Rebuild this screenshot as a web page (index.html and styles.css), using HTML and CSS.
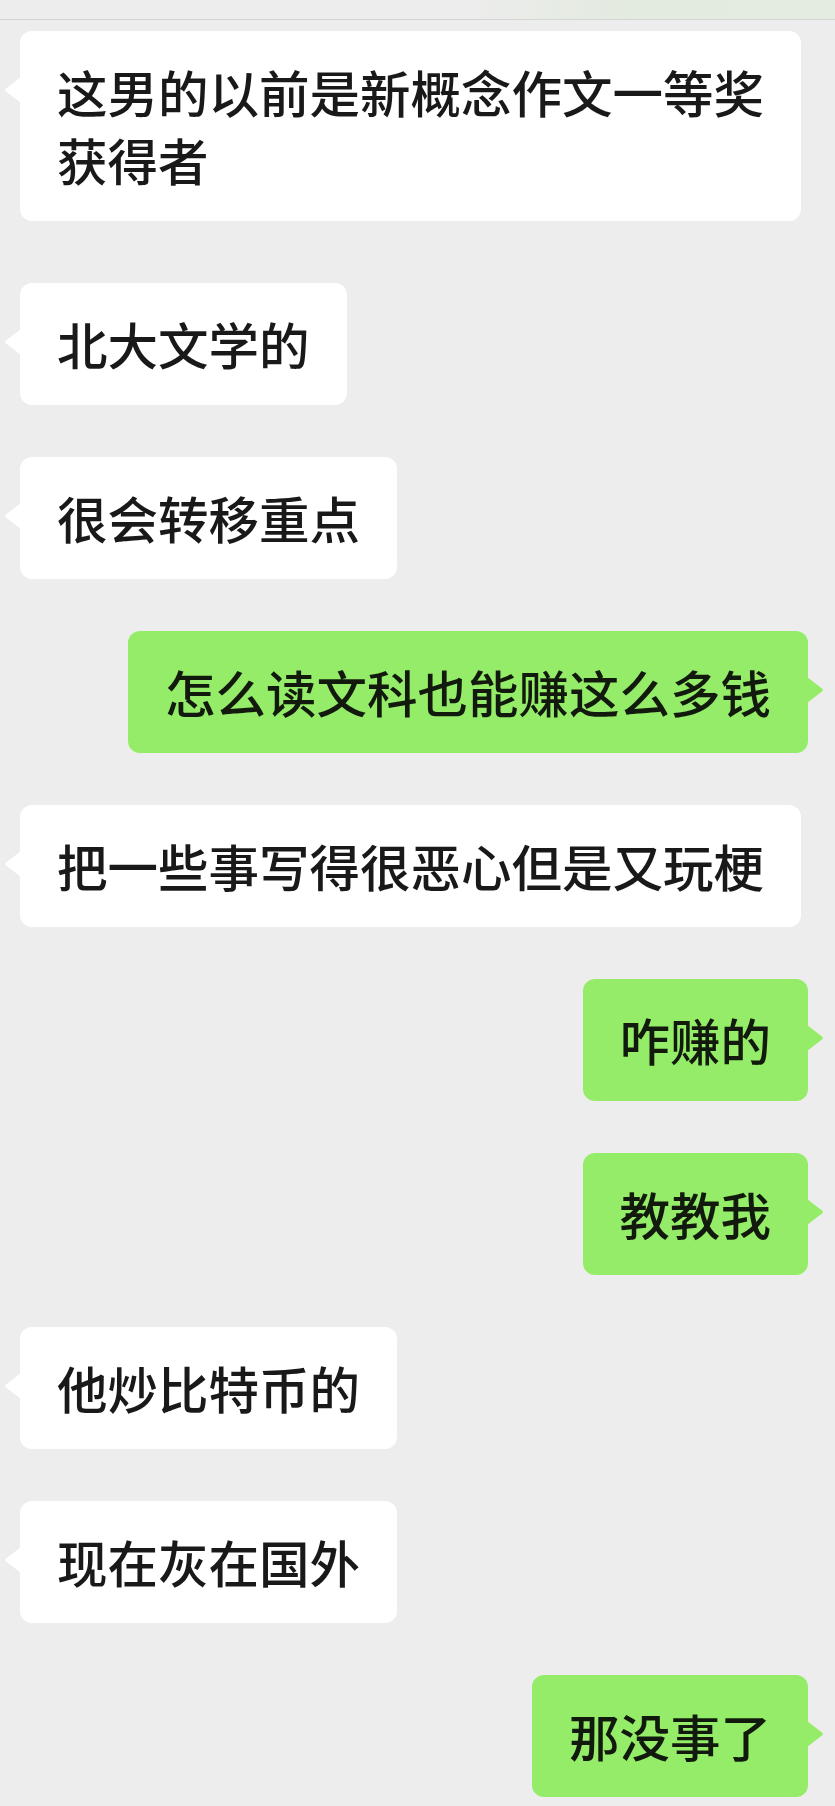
FILE: index.html
```html
<!DOCTYPE html>
<html lang="zh-CN">
<head>
<meta charset="utf-8">
<title>聊天记录</title>
<link rel="stylesheet" href="styles.css">
</head>
<body>
<div class="screen">
  <div class="topbar"></div>
  <div class="chat">
    <div class="row left first"><div class="bubble">这男的以前是新概念作文一等奖获得者</div></div>
    <div class="row left"><div class="bubble">北大文学的</div></div>
    <div class="row left"><div class="bubble">很会转移重点</div></div>
    <div class="row right"><div class="bubble">怎么读文科也能赚这么多钱</div></div>
    <div class="row left"><div class="bubble">把一些事写得很恶心但是又玩梗</div></div>
    <div class="row right"><div class="bubble">咋赚的</div></div>
    <div class="row right"><div class="bubble">教教我</div></div>
    <div class="row left"><div class="bubble">他炒比特币的</div></div>
    <div class="row left"><div class="bubble">现在灰在国外</div></div>
    <div class="row right"><div class="bubble">那没事了</div></div>
  </div>
</div>
</body>
</html>
```
FILE: styles.css
```css
html, body {
  margin: 0;
  padding: 0;
  background: #ededed;
}
.screen {
  width: 835px;
  height: 1806px;
  overflow: hidden;
  background: #ededed;
  font-family: "Noto Sans CJK SC", "Noto Sans", sans-serif;
  color: #191919;
}
.topbar {
  height: 19px;
  border-bottom: 1px solid #d3d5d3;
  background: linear-gradient(90deg, #ededed 0%, #ededed 55%, #e3eadf 75%, #e4ebe1 100%);
}
.chat {
  display: flex;
  flex-direction: column;
  gap: 52px;
  padding-top: 11px;
}
.row {
  display: flex;
}
.row.first {
  margin-bottom: 10px;
}
.row.left {
  justify-content: flex-start;
  padding-left: 20px;
}
.row.right {
  justify-content: flex-end;
  padding-right: 27px;
}
.bubble {
  position: relative;
  box-sizing: border-box;
  max-width: 781px;
  padding: 26px 37px 28px;
  font-size: 50.5px;
  font-weight: 500;
  line-height: 68px;
  border-radius: 12px;
  background: #ffffff;
  word-break: break-all;
}
.right .bubble {
  background: #95ec69;
  color: #111a0c;
}
.bubble::before {
  content: "";
  position: absolute;
  top: 46px;
  width: 16px;
  height: 26px;
  background: inherit;
}
.left .bubble::before {
  left: -15px;
  clip-path: polygon(1px 44%, 0 50%, 1px 56%, 100% 100%, 100% 0);
}
.right .bubble::before {
  right: -15px;
  clip-path: polygon(calc(100% - 1px) 44%, 100% 50%, calc(100% - 1px) 56%, 0 100%, 0 0);
}
```
